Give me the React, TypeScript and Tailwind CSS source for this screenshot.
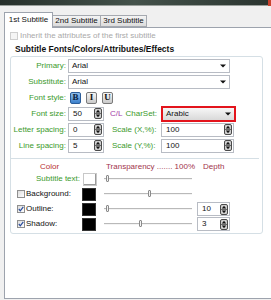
import React from "react";

function Arrow() {
  return (
    <svg width="6" height="4" viewBox="0 0 6 4">
      <path d="M0 0.5h6L3 3.5z" fill="#111" />
    </svg>
  );
}

function SpinButton() {
  return (
    <svg width="8" height="11" viewBox="0 0 8 11">
      <rect x="0.5" y="0.5" width="7" height="10" rx="1.5" fill="#cfcfcf" stroke="#4a4a4a" />
      <path d="M4 1.8L6.2 4.4H1.8z" fill="#111" />
      <path d="M1 5.5h6" stroke="#6a6a6a" />
      <path d="M4 9.2L6.2 6.6H1.8z" fill="#111" />
    </svg>
  );
}

function Select({ value, className }: { value: string; className: string }) {
  return (
    <div
      className={
        "flex h-[14px] items-center justify-between border border-[#b8bcc4] bg-white pl-[3px] pr-[3px] " +
        className
      }
    >
      <span>{value}</span>
      <Arrow />
    </div>
  );
}

function Spin({ value, className }: { value: string; className: string }) {
  return (
    <div
      className={
        "flex h-[14px] items-center justify-between border border-[#b8bcc4] bg-white pl-[4px] pr-[1px] " +
        className
      }
    >
      <span>{value}</span>
      <SpinButton />
    </div>
  );
}

function Slider({ thumb }: { thumb: string }) {
  return (
    <div className="relative h-[8px] w-[88px]">
      <div className="absolute left-0 right-0 top-[3px] h-px bg-[#b9b9b9]" />
      <div className="absolute left-0 right-0 top-[4px] h-px bg-[#f4f4f4]" />
      <div className={"absolute top-0 h-[7px] w-[3px] rounded-[1px] border border-[#8a8a8a] bg-[#f4f4f4] " + thumb} />
    </div>
  );
}

function Check({ checked }: { checked?: boolean }) {
  return (
    <div className="flex h-[8px] w-[8px] items-center justify-center border border-[#8f8f8f] bg-gradient-to-br from-[#dcdcdc] to-white">
      {checked && (
        <svg width="6" height="6" viewBox="0 0 6 6">
          <path d="M0.8 3l1.5 1.8L5.3 0.8" stroke="#2a4c9c" strokeWidth="1.2" fill="none" />
        </svg>
      )}
    </div>
  );
}

function StyleBtn({ ch, active }: { ch: string; active?: boolean }) {
  return (
    <div
      className={
        "flex h-[12px] w-[11px] items-center justify-center rounded-[2px] border font-['Liberation_Serif',serif] text-[9px] font-bold leading-none " +
        (active
          ? "border-[#2b5d99] bg-gradient-to-b from-[#8fc0ef] to-[#3a7fcb] text-[#0c2340]"
          : "border-[#7a7a7a] bg-gradient-to-b from-[#f6f6f6] to-[#c9c9c9] text-[#111]")
      }
    >
      {ch}
    </div>
  );
}

function Swatch({ black }: { black?: boolean }) {
  return (
    <div
      className={
        "h-[13px] w-[14px] border " +
        (black ? "border-[#333] bg-black" : "border-[#c8c8c8] bg-white shadow-[inset_-1px_-1px_0_#9a9a9a]")
      }
    />
  );
}

export default function App() {
  const label = "w-[55px] shrink-0 text-right text-[#3b9a2b]";
  return (
    <div className="h-[300px] w-[271px] overflow-hidden bg-[#f0f0f0] font-['Liberation_Sans',Arial,sans-serif] text-[8px] leading-none text-[#111]">
      <div className="flex h-[6px]">
        <div className="flex-1 border-b border-[#9aa09c] bg-gradient-to-r from-[#26302b] via-[#44524b] to-[#2b3530]" />
        <div className="w-[3px] bg-[#c9412d]" />
      </div>

      <div className="mt-[6px] flex h-[16px] items-end pl-[4px]">
        <div className="relative z-10 flex h-[16px] w-[49px] items-start justify-center border border-b-0 border-[#9da3ad] bg-white pt-[3px]">
          1st Subtitle
        </div>
        <div className="mb-[1px] flex h-[12px] w-[48px] items-center justify-center border border-l-0 border-[#a5a9b0] bg-gradient-to-b from-[#f4f4f4] to-[#dcdcdc]">
          2nd Subtitle
        </div>
        <div className="mb-[1px] flex h-[12px] w-[46px] items-center justify-center border border-l-0 border-[#a5a9b0] bg-gradient-to-b from-[#f4f4f4] to-[#dcdcdc]">
          3rd Subtitle
        </div>
      </div>

      <div className="-mt-px ml-[4px] h-[272px] border-y border-l border-[#9da3ad] bg-white pl-[5px] pt-[3px]">
        <div className="flex h-[9px] items-center gap-[2px]">
          <div className="h-[8px] w-[8px] border border-[#cfcfcf] bg-[#f5f5f5]" />
          <span className="text-[#a9a9a9]">Inherit the attributes of the first subtitle</span>
        </div>

        <div className="mt-[5px] pl-[5px] text-[8.5px] font-bold">Subtitle Fonts/Colors/Attributes/Effects</div>

        <div className="mt-[2px] h-[178px] w-[253px] rounded-[3px] border border-[#d5dfe5] pt-[2px]">
          <div className="flex flex-col gap-[2px]">
            <div className="flex h-[14px] items-center gap-[2px]">
              <span className={label}>Primary:</span>
              <Select value="Arial" className="w-[162px]" />
            </div>
            <div className="flex h-[14px] items-center gap-[2px]">
              <span className={label}>Substitute:</span>
              <Select value="Arial" className="w-[162px]" />
            </div>
            <div className="flex h-[14px] items-center gap-[2px]">
              <span className={label}>Font style:</span>
              <div className="ml-[2px] flex gap-[5px]">
                <StyleBtn ch="B" active />
                <StyleBtn ch="I" />
                <StyleBtn ch="U" />
              </div>
            </div>
            <div className="flex h-[14px] items-center gap-[2px]">
              <span className={label}>Font size:</span>
              <Spin value="50" className="w-[36px]" />
              <div className="flex w-[53px] pl-[4px]">
                <span className="text-[#a23aa6]">C/L</span>
                <span className="ml-[3px] text-[#3b9a2b]">CharSet:</span>
              </div>
              <div className="flex h-[16px] w-[75px] items-center justify-between border-2 border-[#e3141c] bg-gradient-to-b from-[#f7f7f7] to-[#d9d9d9] pl-[3px] pr-[3px]">
                <span>Arabic</span>
                <Arrow />
              </div>
            </div>
            <div className="flex h-[14px] items-center gap-[2px]">
              <span className={label}>Letter spacing:</span>
              <Spin value="0" className="w-[36px]" />
              <div className="w-[53px] pl-[6px] text-[#3b9a2b]">Scale (X,%):</div>
              <Spin value="100" className="w-[73px]" />
            </div>
            <div className="flex h-[14px] items-center gap-[2px]">
              <span className={label}>Line spacing:</span>
              <Spin value="5" className="w-[36px]" />
              <div className="w-[53px] pl-[6px] text-[#3b9a2b]">Scale (Y,%):</div>
              <Spin value="100" className="w-[73px]" />
            </div>
          </div>

          <div className="mt-[5px] h-px w-[248px] bg-[#d5dfe5]" />

          <div className="mt-[4px] flex h-[9px] items-center pl-[29px]">
            <span className="w-[66px] text-[#b83232]">Color</span>
            <span className="w-[97px] text-[#a2344c]">Transparency ....... 100%</span>
            <span className="text-[#a2344c]">Depth</span>
          </div>

          <div className="mt-[1px] flex flex-col gap-[2px]">
            <div className="flex h-[13px] items-center">
              <div className="w-[70px] pr-[1px] text-right text-[#3b9a2b]">Subtitle text:</div>
              <div className="ml-[2px]">
                <Swatch />
              </div>
              <div className="ml-[7px]">
                <Slider thumb="left-[2px]" />
              </div>
            </div>
            <div className="flex h-[13px] items-center">
              <div className="flex w-[71px] items-center gap-[1px] pl-[6px]">
                <Check />
                <span>Background:</span>
              </div>
              <Swatch black />
              <div className="ml-[8px]">
                <Slider thumb="left-[44px]" />
              </div>
            </div>
            <div className="flex h-[13px] items-center">
              <div className="flex w-[71px] items-center gap-[1px] pl-[6px]">
                <Check checked />
                <span>Outline:</span>
              </div>
              <Swatch black />
              <div className="ml-[8px]">
                <Slider thumb="left-[2px]" />
              </div>
              <Spin value="10" className="ml-[5px] w-[33px]" />
            </div>
            <div className="flex h-[13px] items-center">
              <div className="flex w-[71px] items-center gap-[1px] pl-[6px]">
                <Check checked />
                <span>Shadow:</span>
              </div>
              <Swatch black />
              <div className="ml-[8px]">
                <Slider thumb="left-[35px]" />
              </div>
              <Spin value="3" className="ml-[5px] w-[33px]" />
            </div>
          </div>
        </div>
      </div>
    </div>
  );
}
